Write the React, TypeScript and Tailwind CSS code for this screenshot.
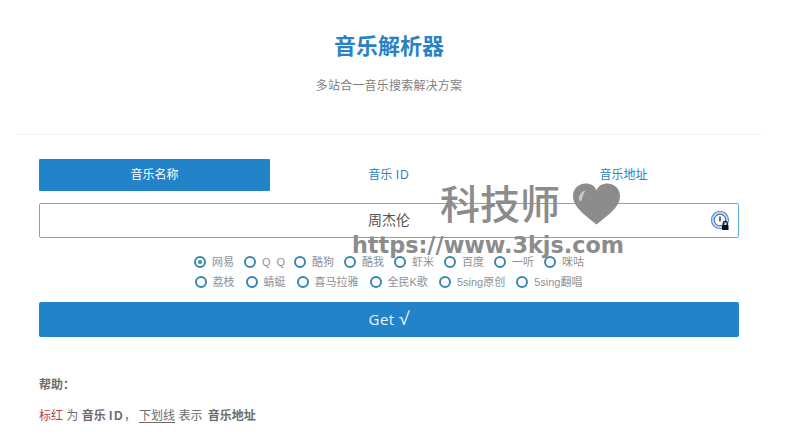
const font = "font-['Liberation_Sans','Noto_Sans_CJK_SC',sans-serif]";

const rowOne = ["网易", "Q Q", "酷狗", "酷我", "虾米", "百度", "一听", "咪咕"];
const rowTwo = ["荔枝", "蜻蜓", "喜马拉雅", "全民K歌", "5sing原创", "5sing翻唱"];

function Radio({ label, checked }: { label: string; checked?: boolean }) {
  return (
    <label className="flex items-center gap-[6px] text-[11px] leading-[20px] text-[#8c9298]">
      <span className="flex h-[12px] w-[12px] items-center justify-center rounded-full border-2 border-[#3a87ad]">
        {checked && <span className="h-[4px] w-[4px] rounded-full bg-[#3a87ad]" />}
      </span>
      <span className={label === "Q Q" ? "w-[22px] whitespace-nowrap tracking-[1.5px]" : ""}>{label}</span>
    </label>
  );
}

function PassIcon() {
  return (
    <svg width="20" height="20" viewBox="0 0 20 20" className="absolute right-[7px] top-[7px]">
      <circle cx="9" cy="9" r="8.5" fill="#dbe6f5" stroke="#5c8fd0" strokeWidth="1.2" />
      <circle cx="9" cy="9" r="5.8" fill="#fff" stroke="#3f74bd" strokeWidth="1.2" />
      <rect x="8.3" y="5.5" width="1.4" height="5" fill="#333" />
      <path d="M12.2 14v-1.6a2 2 0 0 1 4 0V14" fill="none" stroke="#111" strokeWidth="1.2" />
      <rect x="11" y="14" width="6.5" height="5" rx="0.6" fill="#111" />
    </svg>
  );
}

function Watermark() {
  return (
    <div className="pointer-events-none absolute left-[352px] top-[178px] flex w-[280px] flex-col items-center text-[#8c8c8c]">
      <div className="flex h-[54px] w-full items-center pl-[88px]">
        <span className="text-[40px] font-medium leading-[54px]">科技师</span>
        <svg width="47" height="42" viewBox="0 0 48 42" className="ml-[13px] mt-[-2px]">
          <path
            d="M24 42C12 32 0 24 0 13 0 5 6 0 13 0c5 0 9 2 11 7 2-5 6-7 11-7 7 0 13 5 13 13 0 11-12 19-24 29z"
            fill="#8c8c8c"
          />
          <path d="M6 16c0-5 3-8 7-9-2 3-3 6-4 10-1 2-3 1-3-1z" fill="#c8c8c8" />
        </svg>
      </div>
      <div className="w-full whitespace-nowrap text-[22.3px] font-bold leading-[26px] font-['DejaVu_Sans',sans-serif]">
        https://www.3kjs.com
      </div>
    </div>
  );
}

export default function App() {
  return (
    <div className={`${font} relative h-[433px] w-[800px] overflow-hidden bg-white`}>
      <div className="w-[778px] px-4">
        <header className="h-[135px] border-b border-[#f0f0f0] pt-[32px] text-center">
          <h1 className="text-[22px] font-bold leading-[30px] text-[#2a82c4]">音乐解析器</h1>
          <p className="mt-[15px] text-[12px] leading-[18px] tracking-[0.2px] text-[#808080]">多站合一音乐搜索解决方案</p>
        </header>

        <main className="px-[23px] pt-[24px]">
          <div className="grid h-[31px] grid-cols-[231px_1fr_231px] text-center text-[12px] leading-[31px] text-[#2a82c4]">
            <div className="rounded-[1px] bg-[#2283c8] pt-[1px] text-white">音乐名称</div>
            <div className="pt-[1px]">
              音乐 <span className="tracking-[1px]">ID</span>
            </div>
            <div className="pt-[1px]">音乐地址</div>
          </div>

          <div className="relative mt-[13px] h-[35px] rounded-[2px] border border-[#62b0e0] text-center text-[14px] leading-[33px] text-[#555]">
            周杰伦
            <PassIcon />
          </div>

          <div className="mt-[14px] flex justify-center gap-[10px]">
            {rowOne.map((name, i) => (
              <Radio key={name} label={name} checked={i === 0} />
            ))}
          </div>
          <div className="flex justify-center gap-[11px] pr-[1px]">
            {rowTwo.map((name) => (
              <Radio key={name} label={name} />
            ))}
          </div>

          <button className="mt-[10px] block h-[35px] w-full rounded-[2px] bg-[#2283c8] font-['Open_Sans','Noto_Sans_CJK_SC',sans-serif] text-[15px] tracking-[0.5px] text-[#e8f3fa]">
            Get <span className="text-[18px] leading-[18px]">√</span>
          </button>

          <p className="mt-[38px] text-[12px] font-bold leading-[20px] text-[#6b6b6b]">帮助：</p>
          <p className="mt-[11px] text-[12px] leading-[20px] text-[#6b6b6b]">
            <span className="text-[#b5404f]">标红</span> 为{" "}
            <b>
              音乐 <span className="tracking-[1.5px]">ID</span>
            </b>
            ，<u className="ml-[3px] underline-offset-2">下划线</u> 表示 <b className="ml-[2px]">音乐地址</b>
          </p>
        </main>
      </div>
      <Watermark />
    </div>
  );
}
